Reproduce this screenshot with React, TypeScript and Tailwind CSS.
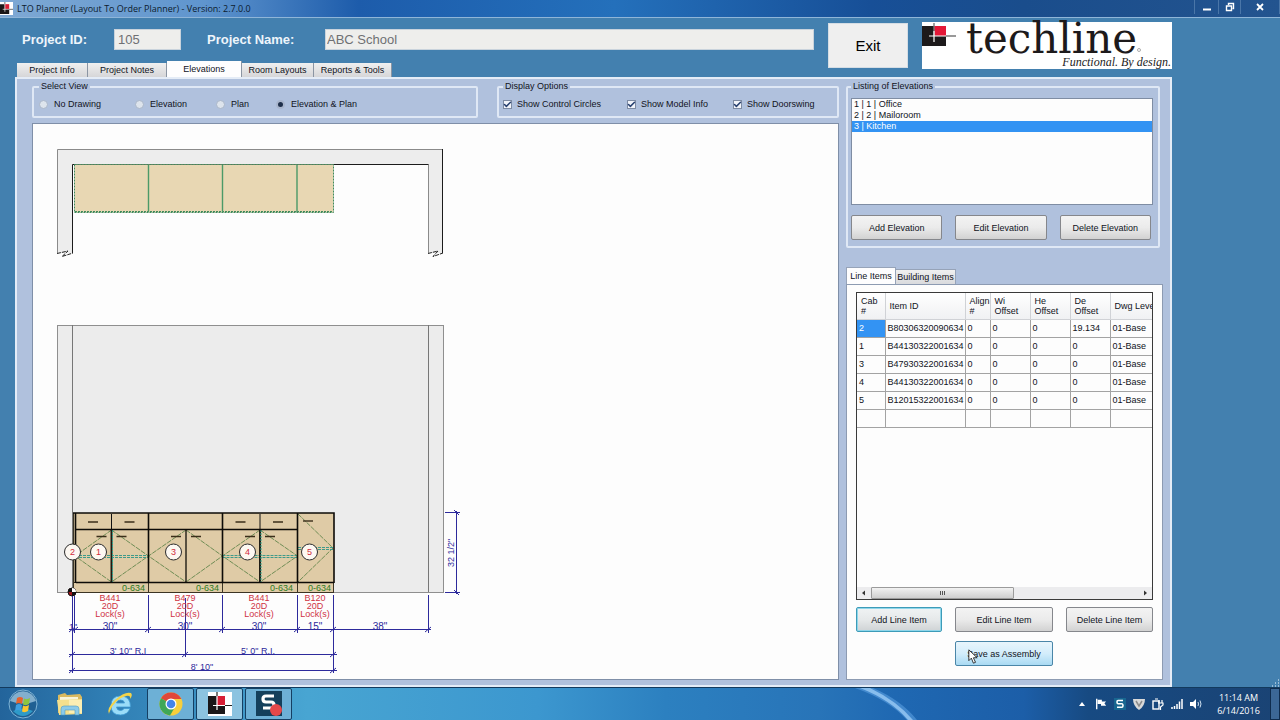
import { ReactNode } from "react";
import { Check } from "lucide-react";

const mainTabs = [
  { label: "Project Info", width: "w-[71px]" },
  { label: "Project Notes", width: "w-[79px]" },
  { label: "Elevations", width: "w-[75px]", active: true },
  { label: "Room Layouts", width: "w-[72px]" },
  { label: "Reports & Tools", width: "w-[78px]" },
];

const viewOptions = ["No Drawing", "Elevation", "Plan", "Elevation & Plan"];
const displayOptions = ["Show Control Circles", "Show Model Info", "Show Doorswing"];
const elevations = ["1 | 1 | Office", "2 | 2 | Mailoroom", "3 | Kitchen"];

const columns = ["Cab #", "Item ID", "Align #", "Wi Offset", "He Offset", "De Offset", "Dwg Level"];
const rows = [
  ["2", "B80306320090634", "0", "0", "0", "19.134", "01-Base"],
  ["1", "B44130322001634", "0", "0", "0", "0", "01-Base"],
  ["3", "B47930322001634", "0", "0", "0", "0", "01-Base"],
  ["4", "B44130322001634", "0", "0", "0", "0", "01-Base"],
  ["5", "B12015322001634", "0", "0", "0", "0", "01-Base"],
  ["", "", "", "", "", "", ""],
];

const Button = ({ children, variant = "normal" }: { children: ReactNode; variant?: "normal" | "focus" | "hover" }) => {
  const look = {
    normal: "border-[#85878c] bg-linear-to-b from-[#f3f3f3] via-[#ebebeb] to-[#d2d2d2]",
    focus: "border-[#3d9bb8] bg-linear-to-b from-[#f0f3f4] via-[#e6e9ea] to-[#cfd3d5] shadow-[inset_0_0_0_1px_#8fd6ea]",
    hover: "border-[#4a86a8] bg-linear-to-b from-[#e8f5fc] via-[#d3edfb] to-[#a9daf3]",
  };
  return (
    <button type="button" className={`h-[25px] w-full whitespace-nowrap rounded-[2px] border ${look[variant]}`}>
      {children}
    </button>
  );
};

const Group = ({ title, className, children }: { title: string; className: string; children: ReactNode }) => (
  <fieldset className={`min-w-0 rounded-[2px] border-2 border-[#dfe8f5] ${className}`}>
    <legend className="px-[2px] leading-[11px]">{title}</legend>
    {children}
  </fieldset>
);

const TechlineMark = () => (
  <svg viewBox="0 0 250 47" className="block h-[47px] w-[250px] overflow-visible" role="img" aria-label="techline">
    <rect width="250" height="47" fill="#fff" />
    <rect y="4" width="24" height="20" fill="#1d1a1b" />
    <rect x="12" y="4" width="12" height="10" fill="#e31837" />
    <path d="M12 1V14" stroke="#777" strokeWidth="1.4" />
    <path d="M12 9V20M7 14H24" stroke="#fff" strokeWidth="1.2" />
    <path d="M24 14H34" stroke="#555" strokeWidth="1.2" />
    <text x="44" y="31" fill="#1d1a1b" fontSize="42" fontFamily="'DejaVu Serif', serif">techline</text>
    <circle cx="217" cy="28" r="1.5" fill="none" stroke="#777" strokeWidth="0.6" />
    <text x="249" y="44" textAnchor="end" fill="#222" fontSize="12" fontStyle="italic" fontFamily="'Liberation Serif', serif">
      Functional. By design.
    </text>
  </svg>
);

// Cabinet fronts, left to right
const doorPairs = [
  { x: 75, mid: 111.5, end: 148.5, split: true },
  { x: 148.5, mid: 186, end: 222.5, split: false },
  { x: 222.5, mid: 260, end: 297.5, split: true },
];

const modelLabels = [
  { x: 110, right: 145, model: "B441", width: '30"' },
  { x: 185, right: 219, model: "B479", width: '30"' },
  { x: 259, right: 293, model: "B441", width: '30"' },
  { x: 315, right: 331, model: "B120", width: '15"' },
];

const controlCircles = [
  { x: 72, n: 2 },
  { x: 98, n: 1 },
  { x: 173, n: 3 },
  { x: 247, n: 4 },
  { x: 309, n: 5 },
];

const PlanDrawing = () => (
  <g fill="none" strokeWidth="1">
    <path d="M57.5 253V149.5H442.5V253H428.5V164.5H72.5V253Z" fill="#ededed" />
    <path d="M57.5 253V149.5H442.5M428.5 164.5V253" stroke="#8a8a8a" />
    <path d="M442.5 149V253M72.5 253V164.5H428.5" stroke="#1c1c1c" />
    <path d="M57 253.5L68 251L62 256.5L73 253" stroke="#222" strokeDasharray="4 1" />
    <path d="M428 253.5L438 251L433 256.5L443 253" stroke="#222" strokeDasharray="4 1" />
    <rect x="74.5" y="164.5" width="259" height="48" fill="#e8d7b3" stroke="#3f8a5c" strokeDasharray="2 1" />
    <path d="M75 211.5H333" stroke="#3f8a5c" strokeDasharray="2 1" />
    <path d="M148.5 165V212M222.5 165V212M297 165V212" stroke="#4c9a68" strokeWidth="1.4" />
  </g>
);

const ElevationDrawing = () => (
  <g fill="none" strokeWidth="1">
    <rect x="57.5" y="325.5" width="386" height="267" fill="#ececec" stroke="#8f8f8f" />
    <path d="M72.5 325V592M428.5 325V592" stroke="#777" />
    <rect x="73" y="513" width="261" height="79" fill="#dfcba6" />
    <path d="M73 582.5H334M73 592.5H334M75 529.5H297M73.5 513V592M148.5 583V592M222.5 583V592M297.5 583V592M333.5 583V592" stroke="#3b3424" />
    {doorPairs.map((d) => (
      <g key={d.x}>
        <path
          d={`M${d.mid} 530L${d.x} 556L${d.mid} 582M${d.mid} 530L${d.end} 556L${d.mid} 582`}
          stroke="#6f8d55"
          strokeDasharray="5 1"
        />
        {d.split && (
          <>
            <path d={`M${d.x} 555.5H${d.end}M${d.x} 557.5H${d.end}`} stroke="#3f9a8a" strokeDasharray="3 1" />
            <path d={`M${d.mid} 514V530`} stroke="#111" />
            <path d={`M${d.x + 13} 522H${d.x + 23}M${d.mid + 13} 522H${d.mid + 23}`} stroke="#3b2f1a" strokeWidth="1.4" />
          </>
        )}
        <path d={`M${d.mid} 530V582`} stroke="#1f1c14" strokeWidth={d.split ? 2 : 1.4} />
        {d.split && <path d={`M${d.mid + 1} 530V582`} stroke="#31a08a" strokeDasharray="2 1" />}
        <path d={`M${d.mid - 15} 536.5H${d.mid - 5}M${d.mid + 5} 536.5H${d.mid + 15}`} stroke="#3b2f1a" strokeWidth="1.4" />
      </g>
    ))}
    <path d="M298 514L333 548L298 582" stroke="#6f8d55" strokeDasharray="5 1" />
    <path d="M298 547.5H333M298 549.5H333" stroke="#3f9a8a" strokeDasharray="3 1" />
    <path d="M303 521H313" stroke="#3b2f1a" strokeWidth="1.4" />
    <path d="M73 513H334V583M75.5 513V583M148.5 513V583M222.5 513V583M297.5 513V583" stroke="#0d0b07" strokeWidth="1.6" />
    <path d="M76 529.5H297M76 582.5H334" stroke="#0d0b07" strokeWidth="1.4" />

    <circle cx="72" cy="592" r="4" fill="#a3161b" stroke="#111" />
    <path d="M72 592V588A4 4 0 0 0 68 592ZM72 592V596A4 4 0 0 0 76 592Z" fill="#111" />
    <path d="M72 592H76A4 4 0 0 0 72 588Z" fill="#fff" />
  </g>
);

const Dimensions = () => (
  <g stroke="#2d2a9c" strokeWidth="1" fill="none">
    <path d="M69 629.5H431M69 654.5H337M69 670.5H337" />
    <path d="M72.5 596V673M74.5 596V633M148.5 595V633M185.5 598V657M222.5 595V633M297.5 595V633M333.5 595V673M428.5 595V633" />
    <path d="M456.5 511V594M445 512.5H460M445 592.5H460" />
    {[72, 75, 148, 222, 297, 333, 428].map((x) => (
      <path key={x} d={`M${x - 3} 632L${x + 3} 627`} />
    ))}
    {[72, 185, 333].map((x) => (
      <path key={x} d={`M${x - 3} 657L${x + 3} 652`} />
    ))}
    {[72, 333].map((x) => (
      <path key={x} d={`M${x - 3} 673L${x + 3} 668`} />
    ))}
    <path d="M454 510L459 515M454 590L459 595" />
  </g>
);

const Drawing = () => (
  <svg viewBox="33 124 450 555" className="block h-[555px] w-[450px]" fontSize="9" fontFamily="'Liberation Sans', sans-serif">
    <PlanDrawing />
    <ElevationDrawing />
    <Dimensions />
    {modelLabels.map((m) => (
      <g key={m.x} textAnchor="middle">
        <text x={m.right} y="591" textAnchor="end" fill="#2f7a1f">0-634</text>
        <g fill="#cf3345">
          <text x={m.x} y="601">{m.model}</text>
          <text x={m.x} y="609">20D</text>
          <text x={m.x} y="617">Lock(s)</text>
        </g>
        <text x={m.x} y="630" fontSize="10" fill="#2d2a9c">{m.width}</text>
      </g>
    ))}
    {controlCircles.map((c) => (
      <g key={c.n}>
        <circle cx={c.x + 0.5} cy="552" r="8" fill="#fdf8f2" stroke="#2b2b2b" />
        <text x={c.x + 0.5} y="555" textAnchor="middle" fill="#d02a3c">{c.n}</text>
      </g>
    ))}
    <g fill="#2d2a9c" textAnchor="middle" fontSize="10">
      <text x="73" y="630" fontSize="9">1"</text>
      <text x="380" y="630">38"</text>
      <text x="128" y="654" fontSize="9">3' 10" R.I</text>
      <text x="258" y="654" fontSize="9">5' 0" R.I.</text>
      <text x="202" y="670" fontSize="9">8' 10"</text>
      <text transform="translate(454 553) rotate(-90)" fontSize="9">32 1/2"</text>
    </g>
  </svg>
);

const LineItems = () => (
  <div className="flex min-h-0 flex-1 flex-col overflow-hidden border border-[#3a3a3a] bg-[#fdfdfd]">
    <div className="flex-1 overflow-hidden">
      <table className="w-[323px] table-fixed border-collapse text-left">
        <colgroup>
          <col className="w-[28px]" />
          <col className="w-[80px]" />
          <col className="w-[25px]" />
          <col className="w-[40px]" />
          <col className="w-[40px]" />
          <col className="w-[40px]" />
          <col className="w-[70px]" />
        </colgroup>
        <thead>
          <tr className="h-[26px] bg-linear-to-b from-white to-[#f0f1f3]">
            {columns.map((c) => (
              <th key={c} className="border-r border-b border-[#d0d2d6] p-0 pl-[4px] font-normal leading-[10px]">
                {c}
              </th>
            ))}
          </tr>
        </thead>
        <tbody>
          {rows.map((r, i) => (
            <tr key={i} className="h-[18px]">
              {r.map((cell, j) => (
                <td
                  key={j}
                  className={`border-r border-b border-[#a3a3a3] p-0 pl-[2px] leading-[12px] ${
                    i === 0 && j === 0 ? "bg-[#3393f3] text-white" : ""
                  }`}
                >
                  {cell}
                </td>
              ))}
            </tr>
          ))}
        </tbody>
      </table>
    </div>
    <div className="flex h-[12px] items-stretch bg-[#ececee]">
      <svg viewBox="0 0 14 12" className="w-[14px]"><path d="M8 3.500V8.500L5 6Z" fill="#333" /></svg>
      <div className="flex w-[143px] items-center justify-center gap-px rounded-[1px] border border-[#9b9b9b] bg-linear-to-b from-[#f2f2f2] to-[#cfcfcf]">
        <span className="h-[4px] w-px bg-[#555]" />
        <span className="h-[4px] w-px bg-[#555]" />
        <span className="h-[4px] w-px bg-[#555]" />
      </div>
      <svg viewBox="0 0 14 12" className="ml-auto w-[14px]"><path d="M6 3.500V8.500L9 6Z" fill="#333" /></svg>
    </div>
  </div>
);

const StartOrb = () => (
  <svg viewBox="0 0 30 30" className="size-[30px]">
    <circle cx="15" cy="15" r="14" fill="#1f5f92" stroke="#7fb4d6" />
    <path d="M2 12A13.500 13.500 0 0 1 28 12Q15 17 2 12Z" fill="#9cc3dc" opacity="0.8" />
    <path d="M5 22Q15 32 25 22Q15 17 5 22Z" fill="#35b3e0" opacity="0.7" />
    <path d="M9 9Q12 7 15 9L14 15Q11 13 8 15Z" fill="#e8622c" />
    <path d="M16 9.500Q19 11 22 9L21 15Q18 17 15 15.500Z" fill="#8cc63f" />
    <path d="M8 16Q11 14 14 16L13 22Q10 20 7 22Z" fill="#3f9fe0" />
    <path d="M15 16.500Q18 18 21 16L20 22Q17 24 14 22.500Z" fill="#fbc52d" />
  </svg>
);

const FolderIcon = () => (
  <svg viewBox="0 0 28 26" className="h-[26px] w-[28px]">
    <path d="M2 4L9 2L11 4L24 3L26 6V22H2Z" fill="#d9b95f" />
    <path d="M4 6H22V12H4Z" fill="#f8f3d8" />
    <path d="M1 9L26 8V23L3 24Z" fill="#f5e08d" />
    <path d="M13 9H26V22H13Z" fill="#fbeeb3" />
    <path d="M5 24V18Q5 15 8 15H20Q23 15 23 18V24H19V19H9V24Z" fill="#8ccbe9" stroke="#4f9cc4" strokeWidth="0.6" />
  </svg>
);

const ExplorerIcon = () => (
  <svg viewBox="0 0 28 28" className="size-[28px]">
    <path
      d="M24 18.500Q21.500 25 14.500 25Q5 25 5 15.500Q5 6 14.500 6Q24.500 6 24.500 17H10.500Q11 20.500 14.500 20.500Q17 20.500 18 18.500Z M10.500 13H18.500Q18 10 14.500 10Q11 10 10.500 13Z"
      fill="#9bdcf8"
      stroke="#3f9bd3"
      strokeWidth="0.8"
      fillRule="evenodd"
    />
    <path d="M3 24Q0 19 9 10Q19 1 25 3Q27 5 24 9Q25 5 20 6Q9 9 4 21Q3 23 3 24Z" fill="#f3d34a" />
  </svg>
);

const ChromeIcon = () => (
  <svg viewBox="0 0 24 24" className="size-[24px]">
    <circle cx="12" cy="12" r="11.500" fill="#f7cf3c" />
    <path d="M12 12L2 6.300A11.500 11.500 0 0 1 22 6.300L22.300 7H12Z" fill="#e0473a" />
    <path d="M12 12L2 6.300A11.500 11.500 0 0 0 11 23.500L16 15Z" fill="#3fa757" />
    <circle cx="12" cy="12" r="5.500" fill="#fff" />
    <circle cx="12" cy="12" r="4.300" fill="#4384e8" />
  </svg>
);

const PlannerIcon = ({ className }: { className: string }) => (
  <svg viewBox="0 0 24 24" className={className}>
    <rect width="24" height="24" fill="#fff" />
    <path d="M0 4H9V13H17V22H0Z" fill="#1a1718" />
    <rect x="9" y="4" width="8" height="9" fill="#d81f35" />
    <path d="M9 1V18M5 13.500H23" stroke="#fff" strokeWidth="1.2" />
    <path d="M9 0V4M17 13.500H24" stroke="#222" strokeWidth="1.2" />
  </svg>
);

const SnagitIcon = () => (
  <svg viewBox="0 0 26 26" className="size-[26px]">
    <rect width="26" height="25" fill="#14405c" />
    <path d="M18 5H10Q7 5 7 8T10 11H15Q18 11 18 14T15 17H7" fill="none" stroke="#fff" strokeWidth="3.200" />
    <circle cx="20" cy="19" r="6" fill="#e5484a" />
  </svg>
);

const Taskbar = () => (
  <footer className="relative flex h-[33px] items-center border-t border-[#123a5e] bg-[linear-gradient(90deg,#23649b_0%,#2f7db3_8%,#48a5d2_24%,#3c97cf_42%,#2c80c0_52%,#2874b8_64%,#1f68b2_70%,#1c5ea8_80%,#174a82_85%,#1a4374_100%)] font-['Open_Sans',sans-serif] text-[9px] text-white">
    <button type="button" aria-label="Start" className="flex w-[45px] justify-center"><StartOrb /></button>
    <button type="button" aria-label="Explorer" className="flex w-[50px] justify-center"><FolderIcon /></button>
    <button type="button" aria-label="Internet Explorer" className="flex w-[50px] justify-center"><ExplorerIcon /></button>
    <div className="flex h-full gap-[2px] pl-[2px]">
      <button type="button" aria-label="Chrome" className="flex w-[47px] items-center justify-center rounded-[2px] border border-[#153f63] bg-[#6db0d6]">
        <ChromeIcon />
      </button>
      <button type="button" aria-label="LTO Planner" className="flex w-[47px] items-center justify-center rounded-[2px] border border-[#153f63] bg-[#8cc3e0]">
        <PlannerIcon className="size-[24px]" />
      </button>
      <button type="button" aria-label="Recorder" className="flex w-[47px] items-center justify-center rounded-[2px] border border-[#153f63] bg-[#6db0d6]">
        <SnagitIcon />
      </button>
    </div>
    {/* wallpaper streak showing through the glass */}
    <svg viewBox="0 0 70 32" className="pointer-events-none absolute top-0 right-[355px] h-[32px] w-[70px]">
      <path d="M0 0H18Q46 12 62 32H52Q34 12 0 0Z" fill="#5a9fdf" opacity="0.6" />
      <path d="M5 0H15Q42 13 58 32H53Q36 12 5 0Z" fill="#9acaf5" opacity="0.8" />
    </svg>
    <div className="ml-auto flex h-full items-center gap-[7px]">
      <svg viewBox="0 0 8 6" className="h-[6px] w-[8px]"><path d="M1 5L4 1L7 5Z" fill="#fff" /></svg>
      <svg viewBox="0 0 14 14" className="ml-[2px] size-[12px]"><path d="M2 1V13" stroke="#fff" strokeWidth="1.600" /><path d="M3 2H8V4H13L11 6L13 9H7V7H3Z" fill="#fff" /></svg>
      <svg viewBox="0 0 12 12" className="size-[12px]"><rect width="12" height="12" fill="#176690" /><path d="M9 2.500H4Q3 2.500 3 4T4 5.700H8Q9 6 9 7.500T8 9.300H3" fill="none" stroke="#fff" strokeWidth="1.600" /></svg>
      <svg viewBox="0 0 12 12" className="size-[12px]"><path d="M0 1H12Q12 8 6 12Q0 8 0 1Z" fill="#d9d9d9" /><path d="M3 3L6 8L9 3" fill="none" stroke="#8c8c8c" strokeWidth="1.500" /></svg>
      <svg viewBox="0 0 12 12" className="size-[12px]"><rect x="1" y="3" width="6" height="8" fill="none" stroke="#fff" strokeWidth="1.400" /><path d="M3 1H6M7 2V5M10 2V5M6 5H11V7L8.500 9V12" fill="none" stroke="#fff" strokeWidth="1.200" /></svg>
      <svg viewBox="0 0 12 12" className="size-[12px]"><path d="M1 11V9M3.500 11V8M6 11V6M8.500 11V3.500M11 11V1" stroke="#fff" strokeWidth="1.500" /></svg>
      <svg viewBox="0 0 12 12" className="size-[12px]"><path d="M0 4H3L6 1V11L3 8H0Z" fill="#fff" /><path d="M8 4Q9 6 8 8M10 2.500Q12 6 10 9.500" fill="none" stroke="#cfe0ef" /></svg>
      <div className="w-[54px] pl-[5px] text-center leading-[13px]">
        <div>11:14 AM</div>
        <div>6/14/2016</div>
      </div>
      <button type="button" aria-label="Show desktop" className="h-full w-[10px] border border-[#0f2c4e] bg-[#3c6796]" />
    </div>
  </footer>
);

const App = () => (
  <div className="flex min-h-screen flex-col bg-[#4380af] font-['Liberation_Sans',sans-serif] text-[9px] leading-[12px] text-[#10131c]">
    <header className="flex h-[18px] items-center justify-between border-b border-[#8fb5d8] bg-[linear-gradient(90deg,#7fa9d4_0%,#5f95ce_16%,#1d5cab_28%,#2470bb_48%,#174f97_68%,#1a4d8c_80%,#23548f_100%)]">
      <div className="flex items-center gap-[4px] font-['Open_Sans',sans-serif] text-[9px] text-[#0c1a2c]">
        <PlannerIcon className="size-[13px]" />
        <span>LTO Planner (Layout To Order Planner) - Version: 2.7.0.0</span>
      </div>
      <div className="flex h-[14px] self-start text-white">
        <button type="button" aria-label="Minimize" className="flex w-[24px] items-center justify-center border-l border-[#4a76a8]">
          <svg viewBox="0 0 10 10" className="size-[10px]"><path d="M1 7.500H9" stroke="#fff" strokeWidth="2" /></svg>
        </button>
        <button type="button" aria-label="Restore" className="flex w-[22px] items-center justify-center border-l border-[#4a76a8]">
          <svg viewBox="0 0 10 10" className="size-[10px]"><path d="M1.500 4H6.500V8.500H1.500ZM3.500 3V1.500H8.500V6.500H7.500" fill="none" stroke="#fff" strokeWidth="1.400" /></svg>
        </button>
        <button type="button" aria-label="Close" className="flex w-[40px] items-center justify-center border-x border-[#4a76a8]">
          <svg viewBox="0 0 10 10" className="size-[10px]"><path d="M2 2L8 8M8 2L2 8" stroke="#fff" strokeWidth="1.800" /></svg>
        </button>
      </div>
    </header>

    <section className="flex h-[59px] justify-between pr-[108px] pl-[17px]">
      <div className="flex flex-1 flex-col justify-between pt-[11px]">
        <div className="flex items-center font-['Liberation_Sans',sans-serif] text-[13px] leading-[19px]">
          <label htmlFor="project-id" className="w-[97px] pl-[5px] font-bold text-[#eef5fb]">Project ID:</label>
          <input id="project-id" readOnly value="105" className="h-[21px] w-[67px] border border-[#c9d3dc] bg-[#eeeeec] px-[3px] text-[#6f7073]" />
          <label htmlFor="project-name" className="w-[144px] pl-[26px] font-bold text-[#eef5fb]">Project Name:</label>
          <input id="project-name" readOnly value="ABC School" className="h-[21px] min-w-0 flex-1 border border-[#c9d3dc] bg-[#eeeeec] px-[1px] text-[#6f7073]" />
        </div>
        <nav className="flex items-end">
          {mainTabs.map((tab) => (
            <button
              key={tab.label}
              type="button"
              className={`whitespace-nowrap border-r border-[#8b95a3] ${tab.width} ${
                tab.active ? "h-[16px] bg-[#fdfdfe] pb-[1px]" : "h-[14px] bg-linear-to-b from-[#f0f0f0] to-[#d6d6d8]"
              }`}
            >
              {tab.label}
            </button>
          ))}
        </nav>
      </div>
      <button type="button" className="mx-[14px] mt-[5px] h-[45px] w-[80px] border border-[#d5dde4] bg-[#efefef] font-['Liberation_Sans',sans-serif] text-[15px] text-black">
        Exit
      </button>
      <div className="mt-[4px]">
        <TechlineMark />
      </div>
    </section>

    <div className="flex flex-1 items-stretch pl-[15px]">
      <main className="flex flex-1 gap-[7px] border-2 border-[#e4ecf7] bg-[#b0c1dd] pt-[2px] pr-[7px] pb-[5px] pl-[15px]">
        <div className="flex min-w-0 flex-1 flex-col gap-[5px]">
          <div className="flex h-[37px] gap-[19px]">
            <Group title="Select View" className="w-[446px] px-[5px]">
              <div className="grid grid-cols-[96px_81px_60px_auto] pt-[6px]">
                {viewOptions.map((option) => (
                  <label key={option} className="flex items-center gap-[6px] whitespace-nowrap">
                    <input
                      type="radio"
                      name="view"
                      defaultChecked={option === "Elevation & Plan"}
                      className="size-[9px] appearance-none rounded-full border border-[#a9b6c9] bg-[#dde4ec] checked:border-2 checked:border-[#a8b5cc] checked:bg-[#1e2f4a]"
                    />
                    {option}
                  </label>
                ))}
              </div>
            </Group>
            <Group title="Display Options" className="flex-1 px-[4px]">
              <div className="grid grid-cols-[124px_106px_auto] pt-[6px]">
                {displayOptions.map((option) => (
                  <label key={option} className="flex items-center gap-[5px] whitespace-nowrap">
                    <span className="relative size-[9px]">
                      <input type="checkbox" defaultChecked className="block size-[9px] appearance-none border border-[#7d8ba3] bg-[#f1f4fa]" />
                      <Check className="pointer-events-none absolute inset-0 size-[9px] text-[#27406f]" strokeWidth={4} />
                    </span>
                    {option}
                  </label>
                ))}
              </div>
            </Group>
          </div>
          <div className="flex-1 overflow-hidden border border-[#7f8fa8] bg-[#fdfdfd]">
            <Drawing />
          </div>
        </div>

        <aside className="flex w-[317px] flex-col">
          <Group title="Listing of Elevations" className="mr-[3px] px-[3px] pb-[6px]">
            <ul role="listbox" aria-label="Listing of Elevations" className="mt-[6px] mr-[2px] h-[107px] border border-[#7f8da3] bg-[#fdfdfd]">
              {elevations.map((name, i) => (
                <li
                  key={name}
                  role="option"
                  aria-selected={i === 2}
                  className={`h-[11px] pl-[2px] leading-[11px] ${i === 2 ? "bg-[#3393f3] text-white" : ""}`}
                >
                  {name}
                </li>
              ))}
            </ul>
            <div className="grid grid-cols-3 gap-[13px] pt-[10px] pr-[4px]">
              <Button>Add Elevation</Button>
              <Button>Edit Elevation</Button>
              <Button>Delete Elevation</Button>
            </div>
          </Group>

          <nav className="mt-[19px] flex items-end">
            <button type="button" className="h-[17px] w-[50px] whitespace-nowrap border border-b-0 border-[#96a3b8] bg-[#fdfdfe]">Line Items</button>
            <button type="button" className="h-[15px] w-[60px] whitespace-nowrap border border-b-0 border-l-0 border-[#96a3b8] bg-linear-to-b from-[#f0f0f0] to-[#d9dadd]">
              Building Items
            </button>
          </nav>
          <div className="flex flex-1 flex-col border border-[#8d9bb2] bg-[#fdfdfd] px-[9px] pt-[7px] pb-[13px]">
            <LineItems />
            <div className="grid grid-cols-[86px_98px_87px] justify-between gap-y-[9px] pt-[7px]">
              <Button variant="focus">Add Line Item</Button>
              <Button>Edit Line Item</Button>
              <Button>Delete Line Item</Button>
              <div className="relative col-start-2">
                <Button variant="hover">Save as Assembly</Button>
                <svg viewBox="0 0 12 18" className="pointer-events-none absolute top-[8px] left-[13px] h-[15px] w-[10px]">
                  <path d="M1 1V14L4 11L6.500 17L9 16L6.500 10.500H11Z" fill="#fff" stroke="#111" />
                </svg>
              </div>
            </div>
          </div>
        </aside>
      </main>
      <div className="flex w-[108px] items-end justify-end pr-[1px]">
        <svg viewBox="0 0 8 8" className="size-[8px]">
          <path d="M1 7H2M4 7H5M7 7H8M4 4H5M7 4H8M7 1H8" stroke="#b9d0e4" strokeWidth="1.500" />
        </svg>
      </div>
    </div>

    <Taskbar />
  </div>
);

export default App;
